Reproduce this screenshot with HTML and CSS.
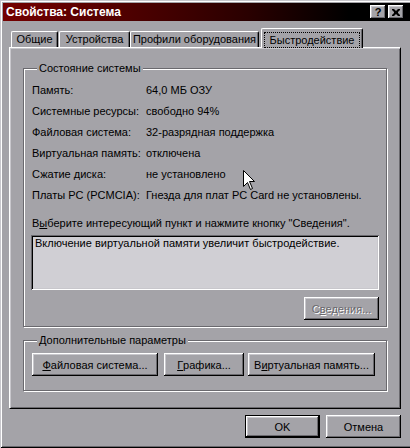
FILE: index.html
```html
<!DOCTYPE html>
<html lang="ru">
<head>
<meta charset="utf-8">
<title>Свойства: Система</title>
<link rel="stylesheet" href="styles.css">
</head>
<body>
<div class="window">
  <div class="titlebar">
    <span class="title">Свойства: Система</span>
    <div class="tbtns">
      <span class="tbtn help">?</span>
      <span class="tbtn close"><svg width="8" height="7" viewBox="0 0 8 7"><path d="M0 0h2l2 2 2-2h2v1l-2 2v1l2 2v1h-2l-2-2-2 2h-2v-1l2-2v-1l-2-2z" fill="#000"/></svg></span>
    </div>
  </div>
  <div class="body">
    <div class="tabs">
      <div class="tab t1">Общие</div>
      <div class="tab t2">Устройства</div>
      <div class="tab t3">Профили оборудования</div>
      <div class="tab active"><span class="focus">Быстродействие</span></div>
    </div>
    <div class="panel">
      <fieldset class="group g1">
        <legend>Состояние системы</legend>
        <div class="rows">
          <span>Память:</span><span>64,0 МБ ОЗУ</span>
          <span>Системные ресурсы:</span><span>свободно 94%</span>
          <span>Файловая система:</span><span>32-разрядная поддержка</span>
          <span>Виртуальная память:</span><span>отключена</span>
          <span>Сжатие диска:</span><span>не установлено</span>
          <span>Платы PC (PCMCIA):</span><span>Гнезда для плат PC Card не установлены.</span>
        </div>
        <p class="hint">В<u>ы</u>берите интересующий пункт и нажмите кнопку "Сведения".</p>
        <div class="textbox">Включение виртуальной памяти увеличит быстродействие.</div>
        <div class="btnrow"><span class="btn disabled">С<u>в</u>едения...</span></div>
      </fieldset>
      <fieldset class="group g2">
        <legend>Дополнительные параметры</legend>
        <div class="btns2">
          <span class="btn b1"><u>Ф</u>айловая система...</span>
          <span class="btn b2"><u>Г</u>рафика...</span>
          <span class="btn b3">В<u>и</u>ртуальная память...</span>
        </div>
      </fieldset>
    </div>
    <div class="footer">
      <span class="btn default">OK</span>
      <span class="btn">Отмена</span>
    </div>
  </div>
  <svg class="cursor" width="13" height="20" viewBox="0 0 13 20"><path d="M0.5 0.5V16.5L4.5 12.5L7.5 19.5L9.5 18.5L6.5 11.5H11.5Z" fill="#fff" stroke="#000" stroke-width="1"/></svg>
</div>
</body>
</html>
```
FILE: styles.css
```css
* { box-sizing: border-box; }
html, body { margin: 0; padding: 0; }
body {
  width: 410px;
  height: 448px;
  overflow: hidden;
  background: #a4a3a8;
  font-family: "Liberation Sans", Arial, sans-serif;
  font-size: 11px;
  color: #000;
}
.window {
  position: relative;
  width: 413px;
  height: 448px;
  padding: 3px;
  background: #a4a3a8;
  box-shadow: inset 1px 1px 0 #c8c7cc, inset -1px -1px 0 #000, inset 2px 2px 0 #fff, inset -2px -2px 0 #6a696e;
}
.titlebar {
  height: 18px;
  display: flex;
  align-items: center;
  justify-content: space-between;
  padding: 0 6px 0 3px;
  background: linear-gradient(to right, #740000 0%, #2a0000 60%, #000 85%);
}
.title {
  color: #fff;
  font-weight: bold;
  font-size: 12px;
  line-height: 14px;
}
.tbtns { display: flex; gap: 2px; }
.tbtn {
  width: 16px;
  height: 14px;
  display: flex;
  align-items: center;
  justify-content: center;
  background: #a4a3a8;
  font-weight: bold;
  font-size: 11px;
  line-height: 12px;
  box-shadow: inset -1px -1px 0 #000, inset 1px 1px 0 #fff, inset -2px -2px 0 #6a696e, inset 2px 2px 0 #c8c7cc;
}
.tbtn svg { display: block; margin-top: 1px; }
.body { padding: 7px 9px 0 6px; }
.tabs {
  display: flex;
  align-items: flex-end;
  height: 19px;
  padding-left: 2px;
}
.tab {
  height: 16px;
  line-height: 15px;
  text-align: center;
  border-top: 1px solid #fff;
  border-left: 1px solid #fff;
  border-right: 1px solid #000;
  border-radius: 2px 2px 0 0;
  box-shadow: inset -1px 0 0 #6a696e;
  white-space: nowrap;
}
.t1 { width: 47px; }
.t2 { width: 71px; margin-left: 1px; }
.t3 { width: 129px; }
.tab.active {
  position: relative;
  z-index: 1;
  width: 102px;
  height: 20px;
  margin-left: 2px;
  margin-bottom: -1px;
  padding: 3px 2px 0 2px;
  background: #a4a3a8;
  line-height: 14px;
}
.focus {
  display: block;
  height: 16px;
  border: 1px dotted #000;
  line-height: 14px;
}
.panel {
  width: 392px;
  height: 362px;
  padding: 14px 13px 0 13px;
  border-top: 1px solid #fff;
  border-left: 1px solid #fff;
  border-right: 1px solid #000;
  border-bottom: 1px solid #000;
  box-shadow: inset 1px 1px 0 #c8c7cc, inset -1px -1px 0 #6a696e;
}
.group {
  margin: 0;
  min-width: 0;
  border: 1px solid #6a696e;
  box-shadow: 1px 1px 0 #fff, inset 1px 1px 0 #fff;
  padding: 4px 7px 6px 7px;
}
.group legend {
  margin-left: 6px;
  padding: 0 2px;
  line-height: 13px;
  background: #a4a3a8;
}
.rows {
  display: grid;
  grid-template-columns: 114px 1fr;
  grid-auto-rows: 21px;
  align-items: center;
  padding-left: 1px;
  white-space: nowrap;
}
.hint {
  margin: 8px 0 0 0;
  padding-left: 1px;
  line-height: 21px;
  white-space: nowrap;
}
.textbox {
  margin-top: 1px;
  height: 55px;
  padding: 2px 4px;
  line-height: 13px;
  background: #d0cfd4;
  box-shadow: inset 1px 1px 0 #6a696e, inset -1px -1px 0 #fff, inset 2px 2px 0 #000, inset -2px -2px 0 #c8c7cc;
}
.btnrow {
  display: flex;
  justify-content: flex-end;
  margin-top: 7px;
}
.btn {
  display: flex;
  align-items: center;
  justify-content: center;
  width: 75px;
  height: 23px;
  background: #a4a3a8;
  white-space: nowrap;
  box-shadow: inset -1px -1px 0 #000, inset 1px 1px 0 #fff, inset -2px -2px 0 #6a696e, inset 2px 2px 0 #c8c7cc;
}
.btn.disabled {
  color: #6a696e;
  text-shadow: 1px 1px 0 #fff;
}
.g2 { margin-top: 7px; padding-top: 6px; padding-bottom: 14px; }
.btns2 { display: flex; padding-left: 1px; }
.b1 { width: 126px; }
.b2 { width: 80px; margin-left: 6px; }
.b3 { width: 127px; margin-left: 4px; }
.footer {
  display: flex;
  justify-content: flex-end;
  gap: 6px;
  margin-top: 6px;
}
.btn.default {
  border: 1px solid #000;
  box-shadow: inset -1px -1px 0 #000, inset 1px 1px 0 #fff, inset -2px -2px 0 #6a696e, inset 2px 2px 0 #c8c7cc;
}
u { text-decoration-thickness: 1px; text-underline-offset: 1px; }
.cursor {
  position: absolute;
  left: 243px;
  top: 170px;
}
```
